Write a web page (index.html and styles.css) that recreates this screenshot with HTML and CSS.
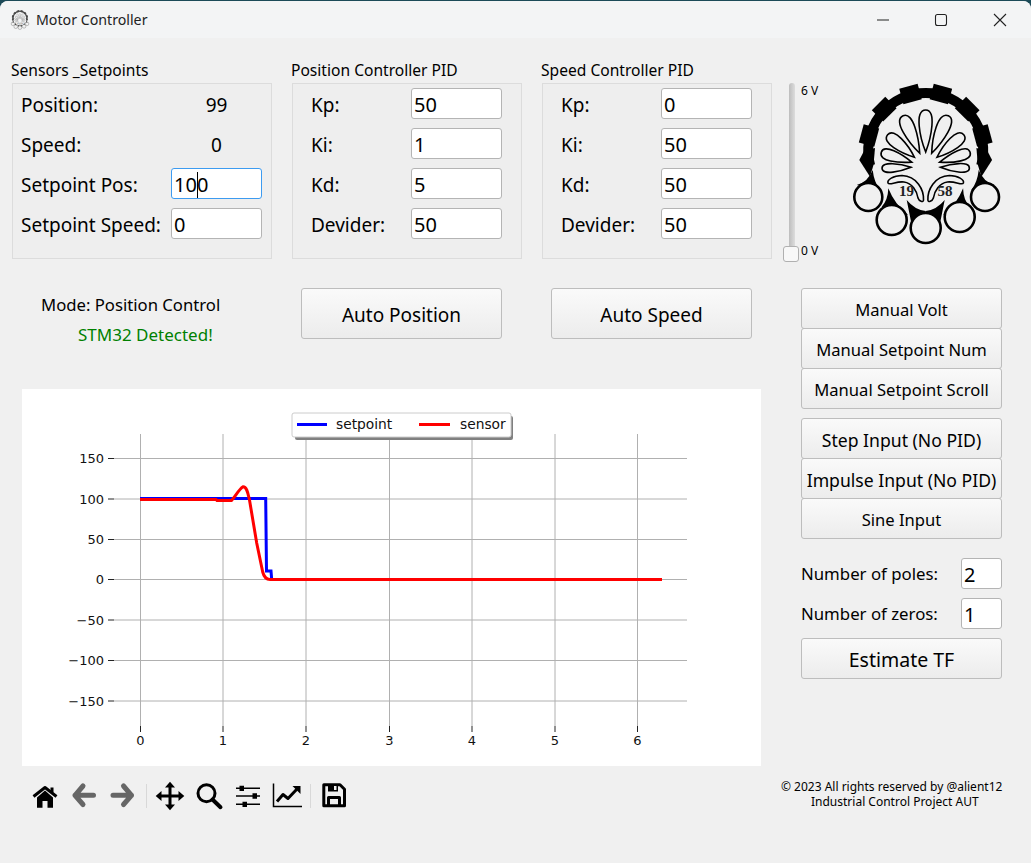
FILE: index.html
```html
<!DOCTYPE html>
<html lang="en">

<head>
    <meta charset="UTF-8">
    <title>Motor Controller</title>
    <link rel="stylesheet" href="styles.css">
</head>

<body>
    <div class="window">
        <div class="titlebar">
            <svg class="app-icon" width="20" height="20" viewBox="850 83 153 164"><use href="#logo-art" /></svg>
            <span class="app-title">Motor Controller</span>
            <div class="win-controls">
                <span class="win-btn"><svg width="14" height="14" viewBox="0 0 14 14"><path d="M1 7H13" /></svg></span>
                <span class="win-btn"><svg width="14" height="14" viewBox="0 0 14 14"><rect x="1.500" y="1.500" width="11" height="11" rx="2" /></svg></span>
                <span class="win-btn"><svg width="14" height="14" viewBox="0 0 14 14"><path d="M1 1L13 13M13 1L1 13" /></svg></span>
            </div>
        </div>

        <div class="top-row">
            <div class="group">
                <div class="group-title">Sensors _Setpoints</div>
                <div class="group-box box-wide">
                    <div class="row"><span>Position:</span><span class="value">99</span></div>
                    <div class="row"><span>Speed:</span><span class="value">0</span></div>
                    <div class="row"><span>Setpoint Pos:</span><div class="field focused">10<i class="caret"></i>0</div></div>
                    <div class="row"><span>Setpoint Speed:</span><div class="field">0</div></div>
                </div>
            </div>

            <div class="group">
                <div class="group-title">Position Controller PID</div>
                <div class="group-box">
                    <div class="row"><span>Kp:</span><div class="field">50</div></div>
                    <div class="row"><span>Ki:</span><div class="field">1</div></div>
                    <div class="row"><span>Kd:</span><div class="field">5</div></div>
                    <div class="row"><span>Devider:</span><div class="field">50</div></div>
                </div>
            </div>

            <div class="group">
                <div class="group-title">Speed Controller PID</div>
                <div class="group-box">
                    <div class="row"><span>Kp:</span><div class="field">0</div></div>
                    <div class="row"><span>Ki:</span><div class="field">50</div></div>
                    <div class="row"><span>Kd:</span><div class="field">50</div></div>
                    <div class="row"><span>Devider:</span><div class="field">50</div></div>
                </div>
            </div>

            <div class="slider">
                <div class="slider-track">
                    <div class="slider-groove"></div>
                    <div class="slider-handle"></div>
                </div>
                <div class="slider-labels"><span>6 V</span><span>0 V</span></div>
            </div>

            <svg class="logo" width="153" height="164" viewBox="850 83 153 164">
                <g id="logo-art">
                    <path class="gear-ring" d="M870.200 165.500 A57.500 57.500 0 1 1 981.200 165.500" />
                    <g class="gear-teeth">
                        <rect x="916.200" y="84" width="19" height="16" transform="rotate(-15 925.700 150.700)" />
                        <rect x="916.200" y="84" width="19" height="16" transform="rotate(15 925.700 150.700)" />
                        <rect x="916.200" y="84" width="19" height="16" transform="rotate(-45 925.700 150.700)" />
                        <rect x="916.200" y="84" width="19" height="16" transform="rotate(45 925.700 150.700)" />
                        <rect x="916.200" y="84" width="19" height="16" transform="rotate(-75 925.700 150.700)" />
                        <rect x="916.200" y="84" width="19" height="16" transform="rotate(75 925.700 150.700)" />
                        <path d="M859.300 160L864 151L875 148L873.500 165L870 176.700Z" />
                        <path d="M992.100 160L987.400 151L976.400 148L977.900 165L981.400 176.700Z" />
                    </g>
                    <g class="petals">
                        <path d="M925.700 152C920 138 914 110 925.700 110C937 110 931 138 925.700 152Z" />
                        <path d="M925.700 152C920 138 914 111 925.700 111C937 111 931 138 925.700 152Z" transform="rotate(-24 925.700 166.700)" />
                        <path d="M925.700 152C920 138 914 111 925.700 111C937 111 931 138 925.700 152Z" transform="rotate(24 925.700 166.700)" />
                        <path d="M925.700 152C920.500 140 915 117 925.700 117C936 117 931 140 925.700 152Z" transform="rotate(-50 925.700 166.700)" />
                        <path d="M925.700 152C920.500 140 915 117 925.700 117C936 117 931 140 925.700 152Z" transform="rotate(50 925.700 166.700)" />
                        <path d="M925.700 152C921 140 916 120 925.700 120C935 120 930.500 140 925.700 152Z" transform="rotate(-72 925.700 166.700)" />
                        <path d="M925.700 152C921 140 916 120 925.700 120C935 120 930.500 140 925.700 152Z" transform="rotate(72 925.700 166.700)" />
                        <path d="M925.700 152C922 142 918 123 925.700 123C933 123 929.500 142 925.700 152Z" transform="rotate(-92 925.700 166.700)" />
                        <path d="M925.700 152C922 142 918 123 925.700 123C933 123 929.500 142 925.700 152Z" transform="rotate(92 925.700 166.700)" />
                        <path d="M923.500 200C924 190 917 176 902 175.500C893 175.500 887 180 888 183C889 186 896 181 904 182C912 183 917 191 918 198C919 201 923.500 203 923.500 200Z" />
                        <path d="M927.900 200C927.400 190 934.400 176 949.400 175.500C958.400 175.500 964.400 180 963.400 183C962.400 186 955.400 181 947.400 182C939.400 183 934.400 191 933.400 198C932.400 201 927.900 203 927.900 200Z" />
                    </g>
                    <g class="wedges">
                        <path d="M872.700 170Q868 182 856.700 185L880 190Q874 182 872.700 170Z" />
                        <path d="M888.300 188.300Q888 200 881.700 206.700L908.300 215Q895 205 888.300 188.300Z" />
                        <path d="M906.700 200Q915 210 925.700 211V216Q918 216 911.700 225Z" />
                        <path d="M978.700 170Q983.400 182 994.700 185L971.400 190Q977.400 182 978.700 170Z" />
                        <path d="M963.100 188.300Q963.400 200 969.700 206.700L943.100 215Q956.400 205 963.100 188.300Z" />
                        <path d="M944.700 200Q936.400 210 925.700 211V216Q933.400 216 939.700 225Z" />
                    </g>
                    <g class="rings">
                        <circle cx="868.300" cy="197" r="14" />
                        <circle cx="891.700" cy="220" r="15" />
                        <circle cx="925.700" cy="228" r="15" />
                        <circle cx="959.700" cy="217" r="15" />
                        <circle cx="985" cy="197" r="14" />
                    </g>
                    <text class="logo-year" x="906.500" y="196">19</text>
                    <text class="logo-year" x="945" y="196">58</text>
                </g>
            </svg>
        </div>

        <div class="middle">
            <div class="left-col">
                <div class="mode-row">
                    <div class="status">
                        <div>Mode: Position Control</div>
                        <div class="detected">STM32 Detected!</div>
                    </div>
                    <button class="btn btn-big">Auto Position</button>
                    <button class="btn btn-big">Auto Speed</button>
                </div>

                <svg class="plot" width="739" height="377" viewBox="22 389 739 377">
                    <rect x="22" y="389" width="739" height="377" fill="#fff" />
                    <g class="grid">
                        <path d="M140.500 434V726M223 434V726M306 434V726M389.500 434V726M472 434V726M555 434V726M637.500 434V726" />
                        <path d="M114 458.500H687M114 499H687M114 539.500H687M114 579.500H687M114 620H687M114 660.500H687M114 701H687" />
                    </g>
                    <g class="ticks">
                        <path d="M140.500 726V732M223 726V732M306 726V732M389.500 726V732M472 726V732M555 726V732M637.500 726V732" />
                        <path d="M108 458.500H114M108 499H114M108 539.500H114M108 579.500H114M108 620H114M108 660.500H114M108 701H114" />
                    </g>
                    <g class="tick-x">
                        <text x="140.500" y="745">0</text>
                        <text x="223" y="745">1</text>
                        <text x="306" y="745">2</text>
                        <text x="389.500" y="745">3</text>
                        <text x="472" y="745">4</text>
                        <text x="555" y="745">5</text>
                        <text x="637.500" y="745">6</text>
                    </g>
                    <g class="tick-y">
                        <text x="104" y="463">150</text>
                        <text x="104" y="504">100</text>
                        <text x="104" y="544">50</text>
                        <text x="104" y="584">0</text>
                        <text x="104" y="625">−50</text>
                        <text x="104" y="665">−100</text>
                        <text x="104" y="706">−150</text>
                    </g>
                    <path class="line-setpoint" d="M140 498.500H265.700L266.500 571H271L271.700 579.500H300" />
                    <path class="line-sensor" d="M140 499.500H216L217 500.500H231.500C235 497 239 489 243 486.700C247 486.500 248 494 249.500 500L256.700 543L262.700 572C264 577 266 579.500 270 579.500H662" />
                    <rect class="legend-shadow" x="295" y="416" width="218" height="24" rx="2" />
                    <rect class="legend-box" x="292" y="413" width="219" height="24" rx="2" />
                    <path class="line-setpoint" d="M297 424.500H327" />
                    <path class="line-sensor" d="M419 424.500H450" />
                    <text class="legend-text" x="336" y="429">setpoint</text>
                    <text class="legend-text" x="460" y="429">sensor</text>
                </svg>
            </div>

            <div class="right-col">
                <div class="btn-stack">
                    <button class="btn">Manual Volt</button>
                    <button class="btn">Manual Setpoint Num</button>
                    <button class="btn">Manual Setpoint Scroll</button>
                </div>
                <div class="btn-stack">
                    <button class="btn btn-input">Step Input (No PID)</button>
                    <button class="btn btn-input">Impulse Input (No PID)</button>
                    <button class="btn">Sine Input</button>
                </div>
                <div class="tf-row first"><span>Number of poles:</span><div class="field small">2</div></div>
                <div class="tf-row"><span>Number of zeros:</span><div class="field small">1</div></div>
                <button class="btn btn-estimate">Estimate TF</button>
            </div>
        </div>

        <div class="bottom-row">
            <div class="toolbar">
                <span class="tool"><svg width="30" height="30" viewBox="0 0 30 30"><path class="solid" d="M7 16.500L15 9.500L23 16.500V26.700H17.500V20H12.500V26.700H7Z" /><path class="line" d="M3.500 15.500L15 6.500L26.500 15.500" /><path class="solid" d="M20.500 6.500H23.500V11.500H20.500Z" /></svg></span>
                <span class="tool"><svg width="30" height="30" viewBox="0 0 30 30"><path class="arrow" d="M14 5L6 14.300L14 23.500M6 14.300H24.500" /></svg></span>
                <span class="tool"><svg width="30" height="30" viewBox="0 0 30 30"><path class="arrow" d="M15.500 5L23.500 14.300L15.500 23.500M23.500 14.300H5" /></svg></span>
                <span class="tool-sep"></span>
                <span class="tool"><svg width="30" height="30" viewBox="0 0 30 30"><path class="line" d="M15 4V26M4 15H26" /><path class="solid" d="M15 .7L20 6.500H10ZM15 29.300L10 23.500H20ZM.7 15L6.500 10V20ZM29.300 15L23.500 20V10Z" /></svg></span>
                <span class="tool"><svg width="30" height="30" viewBox="0 0 30 30"><circle class="line" cx="12.500" cy="12.300" r="8.500" /><path class="line thick" d="M18.500 18.500L26.500 26.200" /></svg></span>
                <span class="tool"><svg width="30" height="30" viewBox="0 0 30 30"><path class="thin" d="M3 7.300H27M3 15H27M3 23.300H27" /><path class="solid" d="M6.500 4.700H11V10H6.500ZM19.500 12.300H24V17.700H19.500ZM9.500 20.700H14V26H9.500Z" /></svg></span>
                <span class="tool"><svg width="30" height="30" viewBox="0 0 30 30"><path class="thin" d="M1.500 2.500V25.500H30" /><path class="line" d="M5 20.500L11 13.500L16 17.500L25 8" /><path class="solid" d="M20.500 5H28.500V13Z" /></svg></span>
                <span class="tool-sep"></span>
                <span class="tool"><svg width="30" height="30" viewBox="0 0 30 30"><path class="line" d="M4.800 3.800H21L25.500 8.300V24.800H4.800Z" /><path class="line" d="M9.500 24V16.500H20.500V24" /><path class="solid" d="M9 3.500H19V10.500H9Z" /><path class="cutout" d="M15 5H17.500V9H15Z" /></svg></span>
            </div>
            <div class="copyright">
                <div>© 2023 All rights reserved by @alient12</div>
                <div class="copyright-sub">Industrial Control Project AUT</div>
            </div>
        </div>
    </div>
</body>

</html>
```

FILE: styles.css
```css
html, body {
    height: 100%;
}

body {
    margin: 0;
    padding-top: 1px;
    box-sizing: border-box;
    background-color: #1c4a58;
    font-family: "Noto Sans", sans-serif;
    color: #000;
    overflow: hidden;
}

.window {
    height: 100%;
    background-color: #f0f0f0;
    border-radius: 8px 8px 0 0;
    overflow: hidden;
}

/* title bar */
.titlebar {
    display: flex;
    align-items: center;
    height: 37px;
    padding: 0 2px 0 10px;
    background-color: #f3f4f5;
}

.app-icon {
    margin-right: 6px;
    opacity: 0.7;
}

.app-title {
    font-size: 14.200px;
    color: #222;
}

.win-controls {
    display: flex;
    margin-left: auto;
}

.win-btn {
    display: flex;
    justify-content: center;
    width: 58.500px;
}

.win-btn svg {
    fill: none;
    stroke: #222;
    stroke-width: 1.100;
}

/* top row */
.top-row {
    display: flex;
    align-items: flex-start;
    padding: 24px 28px 0 11px;
}

.group {
    margin-right: 19px;
}

.group:nth-child(3) {
    margin-right: 11px;
}

.group-title {
    height: 21px;
    font-size: 15.600px;
    line-height: 16px;
}

.group-box {
    display: flex;
    flex-direction: column;
    gap: 9px;
    box-sizing: border-box;
    width: 230px;
    height: 176px;
    margin-left: 1px;
    padding: 4px 19px 0 18px;
    background-color: #eeeeee;
    border: 1px solid #dcdcdc;
    font-size: 19px;
}

.box-wide {
    width: 260px;
    padding: 4px 9px 0 8px;
}

.row {
    display: flex;
    align-items: center;
    justify-content: space-between;
    height: 31px;
}

.row > span {
    padding-top: 2px;
}

.value {
    width: 91px;
    text-align: center;
}

.field {
    box-sizing: border-box;
    width: 91px;
    height: 31px;
    padding-left: 2px;
    background-color: #fff;
    border: 1px solid #b4b4b4;
    border-radius: 3px;
    font-size: 20px;
    line-height: 31px;
}

.field.focused {
    border-color: #3d9bf0;
}

.field.small {
    width: 41px;
}

.caret {
    display: inline-block;
    width: 1px;
    height: 26px;
    margin-right: -1px;
    background-color: #000;
    vertical-align: -6px;
}

/* voltage slider */
.slider {
    display: flex;
    height: 179px;
    margin-top: 21px;
}

.slider-track {
    position: relative;
    width: 16px;
}

.slider-groove {
    width: 6px;
    height: 170px;
    margin-left: 6px;
    background: linear-gradient(to right, #bdbdbd, #dddddd);
    border-radius: 3px;
}

.slider-handle {
    position: absolute;
    left: 0;
    bottom: 0;
    box-sizing: border-box;
    width: 16px;
    height: 16px;
    background-color: #f8f8f8;
    border: 1px solid #b0b0b0;
    border-radius: 3px;
}

.slider-labels {
    display: flex;
    flex-direction: column;
    justify-content: space-between;
    margin-left: 2px;
    padding: 1px 0 4px;
    font-size: 12px;
    line-height: 14px;
}

.logo {
    margin-left: auto;
    margin-top: 21px;
}

.gear-ring {
    fill: none;
    stroke: #000;
    stroke-width: 10;
}

.gear-teeth, .wedges {
    fill: #000;
}

.petals {
    fill: none;
    stroke: #000;
    stroke-width: 1.600;
}

.rings {
    fill: #f0f0f0;
    stroke: #000;
    stroke-width: 2.600;
}

.logo-year {
    font-family: "Liberation Serif", serif;
    font-weight: bold;
    font-size: 15px;
    text-anchor: middle;
    fill: #222;
}

/* middle section */
.middle {
    display: flex;
    margin-top: 26px;
}

.left-col {
    width: 801px;
}

.mode-row {
    display: flex;
    align-items: flex-start;
    height: 101px;
}

.status {
    width: 301px;
    padding: 2px 0 0 41px;
    box-sizing: border-box;
    font-size: 16.700px;
    line-height: 30px;
}

.detected {
    padding-left: 37px;
    color: #008000;
    font-size: 17px;
}

.btn {
    box-sizing: border-box;
    display: block;
    width: 201px;
    height: 41px;
    padding: 2px 0 0;
    background: linear-gradient(to bottom, #fafafa, #ececec);
    border: 1px solid #bdbdbd;
    border-radius: 3px;
    font-family: inherit;
    font-size: 16.600px;
    color: #000;
}

.btn-big {
    height: 51px;
    margin-right: 49px;
    font-size: 19px;
}

.btn-input {
    font-size: 17.600px;
}

.plot {
    display: block;
    margin-left: 22px;
}

.grid path {
    fill: none;
    stroke: #b0b0b0;
    stroke-width: 1;
}

.ticks path {
    fill: none;
    stroke: #222;
    stroke-width: 1;
}

.tick-x text, .tick-y text, .legend-text {
    font-family: "DejaVu Sans", sans-serif;
    font-size: 13px;
    fill: #111;
}

.legend-text {
    font-size: 13.800px;
}

.tick-x text {
    text-anchor: middle;
}

.tick-y text {
    text-anchor: end;
}

.line-setpoint, .line-sensor {
    fill: none;
    stroke-width: 3;
}

.line-setpoint {
    stroke: #0000ff;
}

.line-sensor {
    stroke: #ff0000;
}

.legend-shadow {
    fill: #808080;
}

.legend-box {
    fill: #fff;
    stroke: #ccc;
}

/* right column */
.right-col {
    width: 201px;
}

.btn-stack {
    margin-bottom: 9px;
}

.btn-stack .btn + .btn {
    margin-top: -1px;
}

.tf-row {
    display: flex;
    align-items: center;
    justify-content: space-between;
    height: 31px;
    margin-bottom: 9px;
    font-size: 16.800px;
}

.tf-row.first {
    margin-top: 19px;
}

.btn-estimate {
    font-size: 19.500px;
}

/* bottom */
.bottom-row {
    display: flex;
    justify-content: space-between;
    padding: 13px 50px 0 25px;
}

.toolbar {
    display: flex;
    align-items: center;
    height: 34px;
}

.tool {
    display: flex;
    justify-content: center;
    width: 39px;
}

.tool-sep {
    width: 1px;
    height: 24px;
    margin: 0 3.500px;
    background-color: #d8d8d8;
}

.solid {
    fill: #000;
}

.line {
    fill: none;
    stroke: #000;
    stroke-width: 3;
    stroke-linejoin: round;
}

.line.thick {
    stroke-width: 4;
    stroke-linecap: round;
}

.thin {
    fill: none;
    stroke: #000;
    stroke-width: 1.500;
}

.arrow {
    fill: none;
    stroke: #666;
    stroke-width: 5;
    stroke-linecap: round;
    stroke-linejoin: round;
}

.cutout {
    fill: #f0f0f0;
}

.copyright {
    width: 200px;
    font-size: 12px;
    line-height: 15px;
    white-space: nowrap;
}

.copyright-sub {
    padding-left: 30px;
}
```
